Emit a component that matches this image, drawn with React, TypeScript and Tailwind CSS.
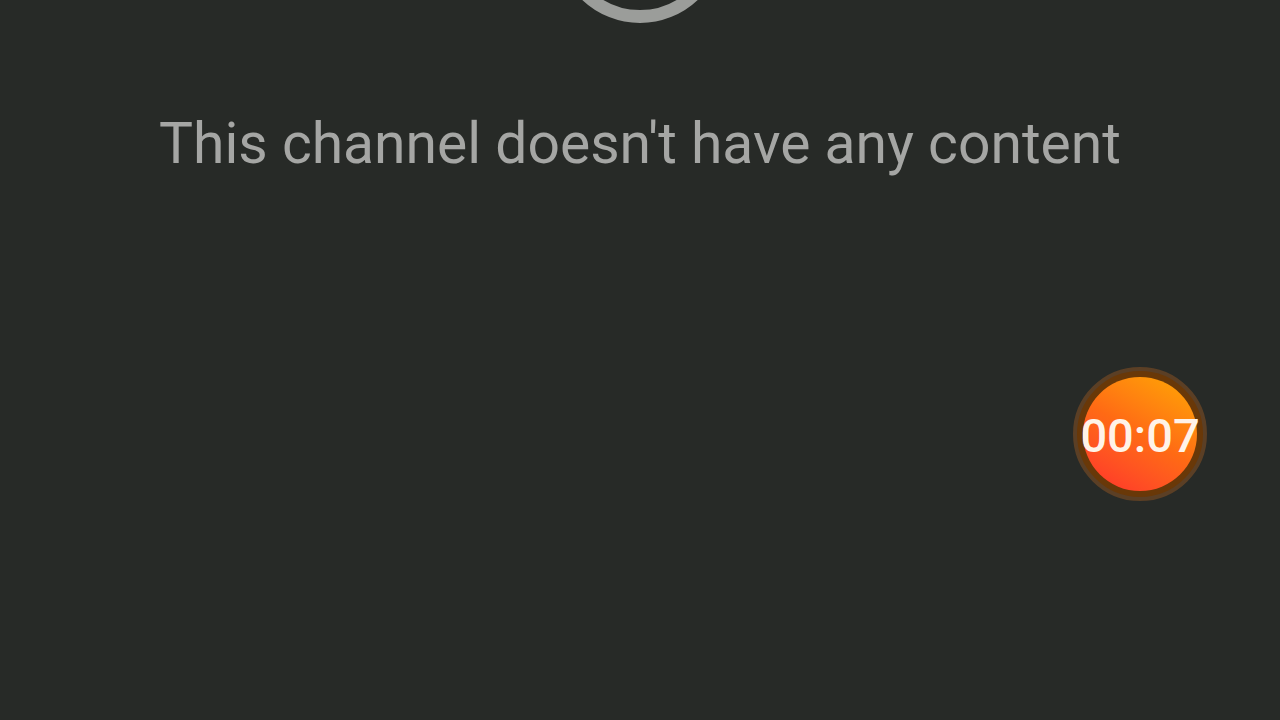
const EmptyIcon = () => (
  <svg width="168" height="168" viewBox="0 0 168 168" fill="none" aria-hidden="true" className="-mt-[145px] shrink-0">
    <circle cx="84" cy="84" r="77.5" stroke="#9b9d9a" strokeWidth="13" />
  </svg>
)

const RecordTimer = ({ time }: { time: string }) => {
  return (
    <button
      type="button"
      className="absolute right-[73px] top-[367px] flex size-[134px] items-center justify-center rounded-full border-4 border-[#5b3f25] bg-[#693808]"
    >
      <span className="flex size-[114px] shrink-0 items-center justify-center rounded-full bg-linear-30 from-[#ff2b2b] via-[#ff6a14] to-[#ffa800]">
        <span className="whitespace-nowrap pt-0.5 text-[47px] font-medium leading-none text-[#fff3e8]">{time}</span>
      </span>
    </button>
  )
}

const App = () => {
  return (
    <main className="relative flex min-h-screen flex-col items-center overflow-hidden bg-[#272a27] font-['Roboto',sans-serif]">
      <EmptyIcon />
      <p className="mt-[85px] whitespace-nowrap text-[57px] leading-[72px] text-[#a5a6a4]">
        This channel doesn't have any content
      </p>
      <RecordTimer time="00:07" />
    </main>
  )
}

export default App
